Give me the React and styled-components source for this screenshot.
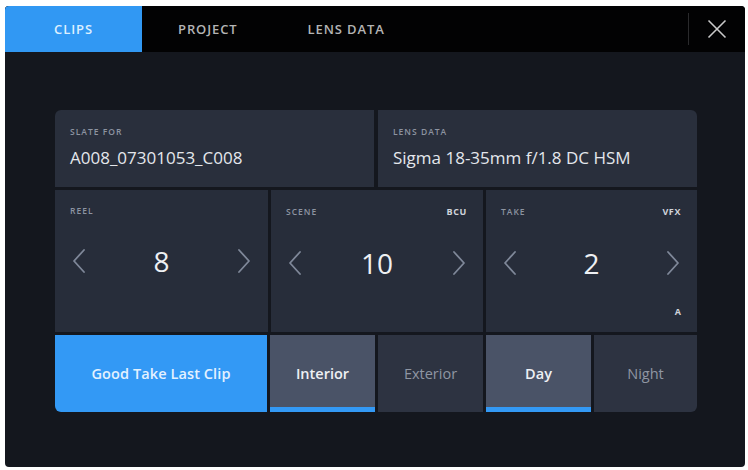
import React from "react";
import styled, { createGlobalStyle } from "styled-components";

const GlobalStyle = createGlobalStyle`
  html, body {
    margin: 0;
    padding: 0;
    background: #ffffff;
  }
  body {
    font-family: "Open Sans", "Liberation Sans", sans-serif;
  }
`;

export default function App() {
  return (
    <>
      <GlobalStyle />
      <Screen>
        <TabBar>
          <Tab active>CLIPS</Tab>
          <Tab>PROJECT</Tab>
          <Tab>LENS DATA</Tab>
          <TabSpacer />
          <Divider />
          <CloseButton>
            <svg width="20" height="20" viewBox="0 0 20 20">
              <path d="M1.5 1.5 L18.5 18.5 M18.5 1.5 L1.5 18.5" stroke="#c9c9c9" strokeWidth="1.6" fill="none" />
            </svg>
          </CloseButton>
        </TabBar>

        <Content>
          <Panel>
            <TopRow>
              <InfoCell>
                <Label>SLATE FOR</Label>
                <InfoValue>A008_07301053_C008</InfoValue>
              </InfoCell>
              <InfoCell>
                <Label>LENS DATA</Label>
                <InfoValue>Sigma 18-35mm f/1.8 DC HSM</InfoValue>
              </InfoCell>
            </TopRow>

            <CounterRow>
              <Counter label="REEL" value="8" />
              <Counter label="SCENE" value="10" tag="BCU" />
              <Counter label="TAKE" value="2" tag="VFX" corner="A" />
            </CounterRow>

            <ButtonRow>
              <GoodTake>Good Take Last Clip</GoodTake>
              <Toggle selected>Interior</Toggle>
              <Toggle>Exterior</Toggle>
              <Toggle selected>Day</Toggle>
              <Toggle>Night</Toggle>
            </ButtonRow>
          </Panel>
        </Content>
      </Screen>
    </>
  );
}

function Chevron({ dir }) {
  const d = dir === "left" ? "M12 1 L2 12 L12 23" : "M2 1 L12 12 L2 23";
  return (
    <svg width="14" height="24" viewBox="0 0 14 24">
      <path d={d} stroke="#7f8899" strokeWidth="1.8" fill="none" strokeLinecap="round" strokeLinejoin="round" />
    </svg>
  );
}

function Counter({ label, value, tag, corner }) {
  return (
    <CounterCell>
      <CounterHead>
        <Label>{label}</Label>
        {tag && <Tag>{tag}</Tag>}
      </CounterHead>
      <CounterBody>
        <Chevron dir="left" />
        <Number>{value}</Number>
        <Chevron dir="right" />
      </CounterBody>
      {corner && <CornerTag>{corner}</CornerTag>}
    </CounterCell>
  );
}

const Screen = styled.div`
  margin: 6px 0 0 5px;
  width: 740px;
  height: 461px;
  border-radius: 4px;
  overflow: hidden;
  background: #14171e;
  display: flex;
  flex-direction: column;
`;

const TabBar = styled.div`
  height: 46px;
  background: #020203;
  display: flex;
  align-items: stretch;
  flex-shrink: 0;
`;

const Tab = styled.div`
  width: ${(p) => (p.active ? "137px" : "auto")};
  padding: ${(p) => (p.active ? "0" : "0 0 0 36px")};
  margin-right: ${(p) => (p.active ? "0" : "34px")};
  background: ${(p) => (p.active ? "#3198f3" : "transparent")};
  color: ${(p) => (p.active ? "#dcefff" : "#b4b4b4")};
  display: flex;
  align-items: center;
  justify-content: ${(p) => (p.active ? "center" : "flex-start")};
  font-size: 13px;
  font-weight: 600;
  letter-spacing: 0.9px;
`;

const TabSpacer = styled.div`
  flex: 1;
`;

const Divider = styled.div`
  width: 1px;
  margin: 7px 0;
  background: #2a2a2c;
`;

const CloseButton = styled.div`
  width: 56px;
  display: flex;
  align-items: center;
  justify-content: center;
`;

const Content = styled.div`
  flex: 1;
  padding: 58px 48px 0 50px;
`;

const Panel = styled.div`
  width: 642px;
  display: flex;
  flex-direction: column;
  gap: 3px;
  border-radius: 6px;
  overflow: hidden;
`;

const TopRow = styled.div`
  display: grid;
  grid-template-columns: 1fr 1fr;
  gap: 4px;
  height: 77px;
`;

const InfoCell = styled.div`
  background: #292f3c;
  padding: 16px 15px 0;
  display: flex;
  flex-direction: column;
  gap: 9px;
`;

const Label = styled.div`
  font-size: 8.5px;
  font-weight: 600;
  letter-spacing: 1px;
  color: #8d94a1;
`;

const InfoValue = styled.div`
  font-size: 17px;
  color: #e4e7ec;
`;

const CounterRow = styled.div`
  display: grid;
  grid-template-columns: 213px 212px 211px;
  gap: 3px;
  height: 142px;
`;

const CounterCell = styled.div`
  position: relative;
  background: #272d3a;
  padding: 15px 16px 0 15px;
  display: flex;
  flex-direction: column;
`;

const CounterHead = styled.div`
  display: flex;
  justify-content: space-between;
  align-items: center;
`;

const Tag = styled.div`
  font-size: 9px;
  font-weight: 700;
  letter-spacing: 0.6px;
  color: #d0d4db;
`;

const CounterBody = styled.div`
  margin-top: 30px;
  display: flex;
  align-items: center;
  justify-content: space-between;
  padding: 0 1px 0 2px;
`;

const Number = styled.div`
  font-size: 28px;
  color: #eef0f3;
  line-height: 30px;
`;

const CornerTag = styled.div`
  position: absolute;
  right: 16px;
  bottom: 14px;
  font-size: 9px;
  font-weight: 700;
  color: #d0d4db;
`;

const ButtonRow = styled.div`
  display: grid;
  grid-template-columns: 212px 105px 105px 105px 103px;
  gap: 3px;
  height: 77px;
`;

const GoodTake = styled.div`
  background: #3399f5;
  color: #e3f1ff;
  font-size: 14.5px;
  font-weight: 600;
  letter-spacing: 0.1px;
  display: flex;
  align-items: center;
  justify-content: center;
`;

const Toggle = styled.div`
  background: ${(p) => (p.selected ? "#4a5367" : "#2d3341")};
  color: ${(p) => (p.selected ? "#eef0f4" : "#8f96a3")};
  font-size: 14.5px;
  font-weight: ${(p) => (p.selected ? 600 : 400)};
  display: flex;
  align-items: center;
  justify-content: center;
  box-shadow: ${(p) => (p.selected ? "inset 0 -5px 0 #3399f5" : "none")};
`;
